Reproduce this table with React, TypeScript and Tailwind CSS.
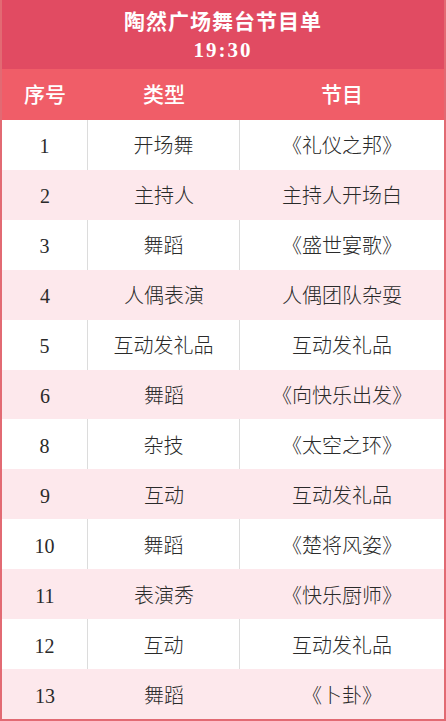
const rows: [string, string, string][] = [
  ["1", "开场舞", "《礼仪之邦》"],
  ["2", "主持人", "主持人开场白"],
  ["3", "舞蹈", "《盛世宴歌》"],
  ["4", "人偶表演", "人偶团队杂耍"],
  ["5", "互动发礼品", "互动发礼品"],
  ["6", "舞蹈", "《向快乐出发》"],
  ["8", "杂技", "《太空之环》"],
  ["9", "互动", "互动发礼品"],
  ["10", "舞蹈", "《楚将风姿》"],
  ["11", "表演秀", "《快乐厨师》"],
  ["12", "互动", "互动发礼品"],
  ["13", "舞蹈", "《卜卦》"],
];

const font = { fontFamily: '"Liberation Serif", "Noto Sans CJK SC", serif' };

export default function App() {
  return (
    <div
      className="w-[446px] h-[721px] bg-white border-2 border-t-0 border-[#e26a73] flex flex-col"
      style={font}
    >
      <div className="h-[69px] bg-[#e14b62] flex flex-col items-center justify-center text-white font-bold text-[21px] leading-[28px] pt-[3px]">
        <div className="tracking-[1px]">陶然广场舞台节目单</div>
        <div className="tracking-[2px]">19:30</div>
      </div>
      <div className="h-[51px] bg-[#f05d68] grid grid-cols-[86px_152px_1fr] items-center text-white text-[21px] font-medium pt-[3px]">
        <div className="text-center">序号</div>
        <div className="text-center">类型</div>
        <div className="text-center">节目</div>
      </div>
      {rows.map(([n, type, name], i) => (
        <div
          key={n}
          className={
            i % 2 === 0
              ? "h-[50px] bg-white grid grid-cols-[86px_152px_1fr] text-[20px] font-light text-[#2a2a2a]"
              : "h-[50px] bg-[#fde8ec] grid grid-cols-[86px_152px_1fr] text-[20px] font-light text-[#2a2a2a]"
          }
        >
          <div
            className={
              i % 2 === 0
                ? "flex items-center justify-center pt-[3px] border-r border-[#dcdcdc]"
                : "flex items-center justify-center pt-[3px]"
            }
          >
            {n}
          </div>
          <div
            className={
              i % 2 === 0
                ? "flex items-center justify-center pt-[3px] border-r border-[#dcdcdc]"
                : "flex items-center justify-center pt-[3px]"
            }
          >
            {type}
          </div>
          <div className="flex items-center justify-center pt-[3px]">{name}</div>
        </div>
      ))}
    </div>
  );
}
